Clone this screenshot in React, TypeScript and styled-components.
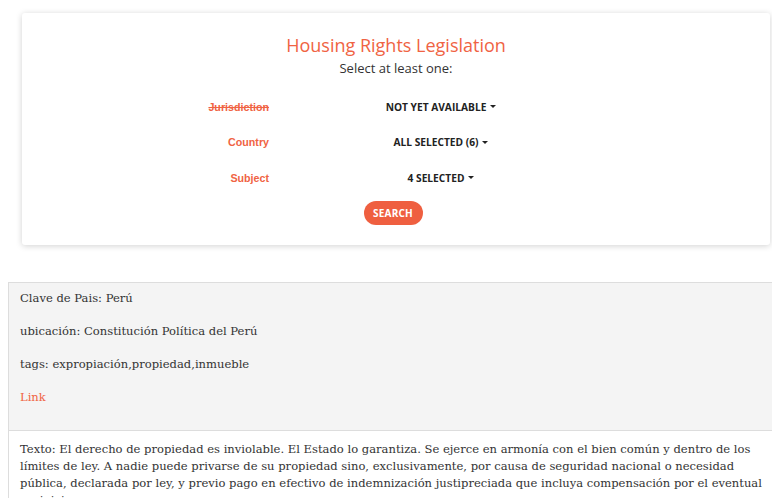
import React from "react";
import styled, { createGlobalStyle } from "styled-components";

const Global = createGlobalStyle`
  html, body { overflow: hidden; }
  body {
    margin: 8px;
    background: #ffffff;
    font-family: "Open Sans", "Liberation Sans", sans-serif;
    color: #333;
  }
`;

const Card = styled.section`
  margin: 5px 0 0 14px;
  width: 748px;
  height: 232px;
  box-sizing: border-box;
  background: #fff;
  border-radius: 3px;
  box-shadow: 0 1px 6px rgba(0, 0, 0, 0.18);
  padding-top: 21px;
  display: flex;
  flex-direction: column;
  align-items: stretch;
`;

const Title = styled.h1`
  margin: 0;
  text-align: center;
  font-family: "Open Sans", sans-serif;
  font-weight: 400;
  font-size: 18px;
  line-height: 22px;
  color: #f06343;
`;

const Subtitle = styled.p`
  margin: 3px 0 0;
  text-align: center;
  font-size: 13px;
  line-height: 18px;
  color: #333;
`;

const Form = styled.div`
  margin-top: 12px;
  display: grid;
  grid-template-columns: 247px 344px;
  grid-auto-rows: 35.5px;
  align-items: center;
`;

const Label = styled.span<{ $disabled?: boolean }>`
  text-align: right;
  font-family: "Liberation Sans", Arial, sans-serif;
  font-weight: 700;
  font-size: 10.7px;
  color: #f06343;
  text-decoration: ${(p) => (p.$disabled ? "line-through" : "none")};
`;

const Dropdown = styled.button`
  justify-self: center;
  display: inline-flex;
  align-items: center;
  gap: 4px;
  border: 0;
  background: transparent;
  padding: 0;
  font-family: "Open Sans", sans-serif;
  font-weight: 700;
  font-size: 10.2px;
  color: #222;
  cursor: pointer;
`;

const Caret = styled.span`
  width: 0;
  height: 0;
  border-left: 3px solid transparent;
  border-right: 3px solid transparent;
  border-top: 3px solid #222;
`;

const SearchButton = styled.button`
  align-self: center;
  margin: 5px 6px 0 0;
  width: 59px;
  height: 24px;
  border: 0;
  border-radius: 12px;
  background: #ef5f40;
  color: #fff;
  font-family: "Open Sans", sans-serif;
  font-weight: 700;
  font-size: 10px;
  letter-spacing: 0.2px;
  cursor: pointer;
`;

const Panel = styled.article`
  margin-top: 37px;
  width: 800px;
  border: 1px solid #dddddd;
  border-right: 0;
  font-family: "DejaVu Serif", "Liberation Serif", serif;
  font-size: 11.55px;
  line-height: 17px;
  color: #333;
`;

const PanelHeader = styled.div`
  background: #f4f4f4;
  border-bottom: 1px solid #dddddd;
  padding: 7px 11px 8px;
`;

const Field = styled.p`
  margin: 0 0 16px;
`;

const FieldLink = styled.a`
  color: #f06343;
  text-decoration: none;
`;

const PanelBody = styled.div`
  padding: 10px 11px;
  width: 760px;
`;

const Text = styled.p`
  margin: 0;
`;

const rows = [
  { label: "Jurisdiction", value: "NOT YET AVAILABLE", disabled: true },
  { label: "Country", value: "ALL SELECTED (6)" },
  { label: "Subject", value: "4 SELECTED" },
];

export default function App() {
  return (
    <>
      <Global />
      <Card>
        <Title>Housing Rights Legislation</Title>
        <Subtitle>Select at least one:</Subtitle>
        <Form>
          {rows.map((r) => (
            <React.Fragment key={r.label}>
              <Label $disabled={r.disabled}>{r.label}</Label>
              <Dropdown>
                {r.value}
                <Caret />
              </Dropdown>
            </React.Fragment>
          ))}
        </Form>
        <SearchButton>SEARCH</SearchButton>
      </Card>
      <Panel>
        <PanelHeader>
          <Field>Clave de Pais: Perú</Field>
          <Field>ubicación: Constitución Política del Perú</Field>
          <Field>tags: expropiación,propiedad,inmueble</Field>
          <Field>
            <FieldLink href="#">Link</FieldLink>
          </Field>
        </PanelHeader>
        <PanelBody>
          <Text>
            Texto: El derecho de propiedad es inviolable. El Estado lo garantiza. Se ejerce en armonía con el bien
            común y dentro de los límites de ley. A nadie puede privarse de su propiedad sino, exclusivamente, por
            causa de seguridad nacional o necesidad pública, declarada por ley, y previo pago en efectivo de
            indemnización justipreciada que incluya compensación por el eventual perjuicio.
          </Text>
        </PanelBody>
      </Panel>
    </>
  );
}
